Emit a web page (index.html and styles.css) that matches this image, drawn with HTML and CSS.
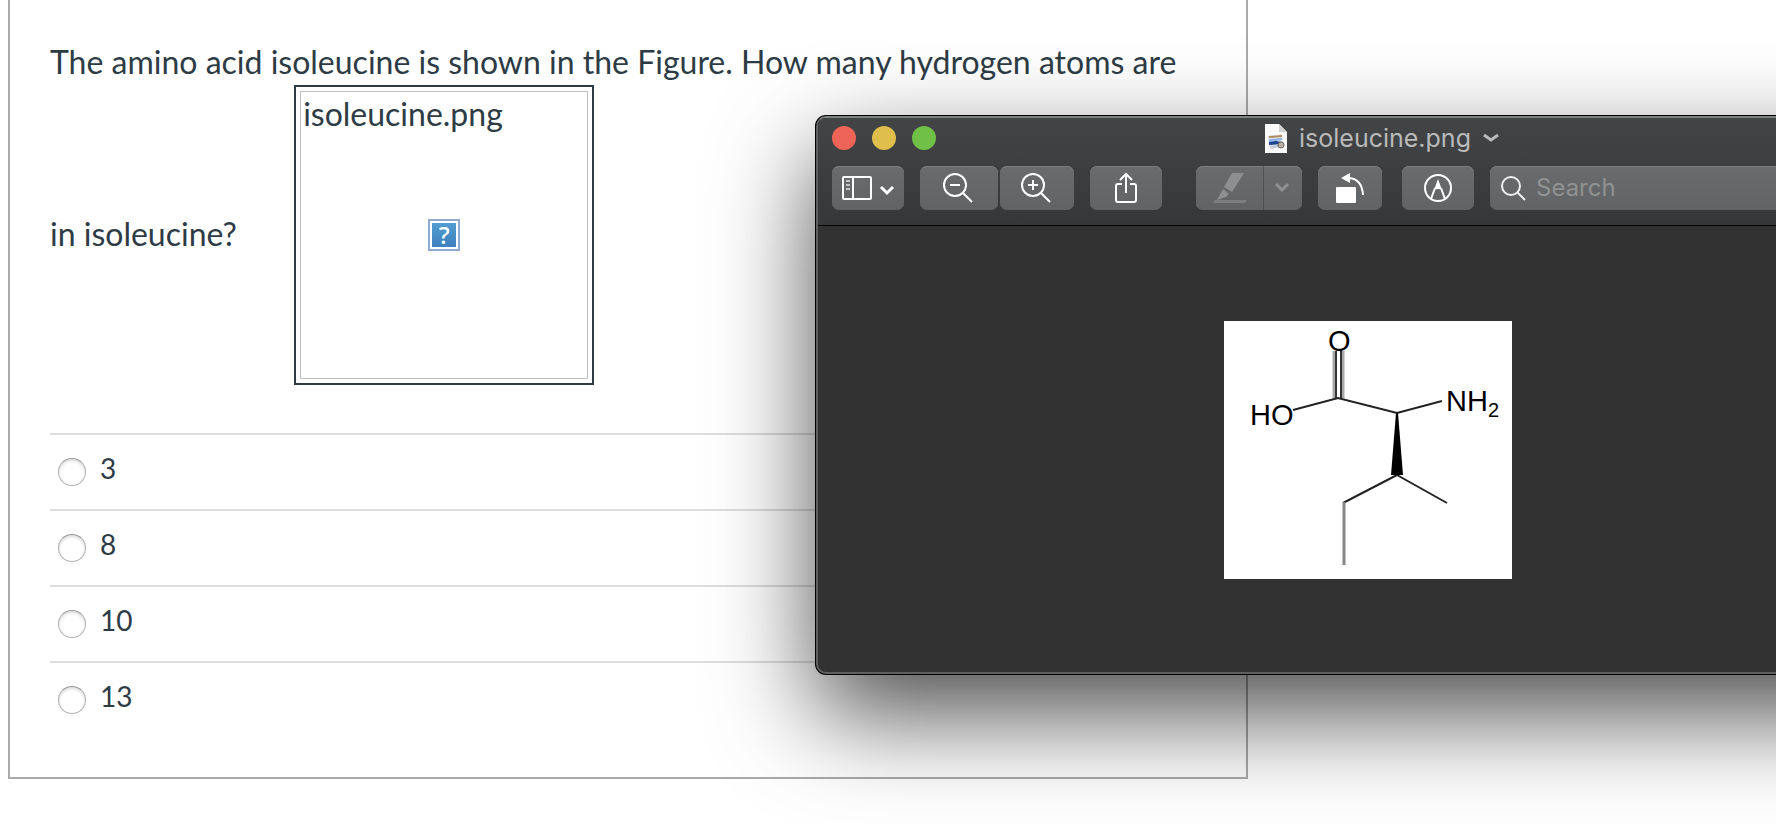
FILE: index.html
```html
<!DOCTYPE html>
<html lang="en">
<head>
<meta charset="utf-8">
<title>Quiz question</title>
<link rel="stylesheet" href="styles.css">
</head>
<body>
<div class="desktop">
<main class="question">
  <p class="question-text">
    The amino acid isoleucine is shown in the Figure. How many hydrogen atoms are<br>
    in isoleucine?
    <span class="missing">
      <span class="missing-frame">
        <span class="missing-alt">isoleucine.png</span>
        <span class="missing-icon">?</span>
      </span>
    </span>
  </p>
  <form class="answers">
    <label class="answer"><input type="radio" name="answer" value="3"><span>3</span></label>
    <label class="answer"><input type="radio" name="answer" value="8"><span>8</span></label>
    <label class="answer"><input type="radio" name="answer" value="10"><span>10</span></label>
    <label class="answer"><input type="radio" name="answer" value="13"><span>13</span></label>
  </form>
</main>

<section class="window" aria-label="isoleucine.png">
  <header class="chrome">
    <div class="titlebar">
      <div class="lights">
        <button class="light close" aria-label="Close"></button>
        <button class="light minimize" aria-label="Minimize"></button>
        <button class="light zoom" aria-label="Zoom"></button>
      </div>
      <div class="title">
        <svg width="22" height="29" viewBox="0 0 22 29">
          <path d="M0 0h14l8 8v21H0z" fill="#fafafa"/>
          <path d="M14 0v8h8z" fill="#d2d2d2"/>
          <path d="M3 12l14-2 1 10-14 3z" fill="#e4e6ea"/>
          <path d="M4 12l13-1v2L4 14z" fill="#b08d5c"/>
          <path d="M4 15l13-1v2l-6 1-7 1z" fill="#8fb4e6"/>
          <path d="M4 18l7-1 6 1v2l-13 1z" fill="#1d4596"/>
          <path d="M5 22l11-2v3l-10 2z" fill="#c3cbdc"/>
          <circle cx="16" cy="21" r="3" fill="#b9b3ab" stroke="#6d665f"/>
        </svg>
        <span>isoleucine.png</span>
        <svg class="title-arrow" width="16" height="10" viewBox="0 0 16 10">
          <path d="M1 2l7 5 7-5" fill="none" stroke="#b9baba" stroke-width="3"/>
        </svg>
      </div>
    </div>
    <div class="toolbar">
      <button class="tool w72" aria-label="Sidebar">
        <svg width="52" height="24" viewBox="0 0 52 24" fill="none" stroke="#fff" stroke-width="2">
          <rect x="1" y="1" width="28" height="22" rx="1"/>
          <path d="M11 1v22"/>
          <path d="M4 5h4M4 9h4M4 13h4" stroke="#c4c5c5"/>
          <path d="M39 11l6 6 6-6" stroke-width="3"/>
        </svg>
      </button>
      <div class="pair">
        <button class="tool w78" aria-label="Zoom out">
          <svg width="32" height="30" viewBox="0 0 32 30" fill="none" stroke="#fff" stroke-width="2">
            <circle cx="12" cy="12" r="11"/><path d="M7 12h10M20 20l9 9"/>
          </svg>
        </button>
        <button class="tool w74" aria-label="Zoom in">
          <svg width="32" height="30" viewBox="0 0 32 30" fill="none" stroke="#fff" stroke-width="2">
            <circle cx="12" cy="12" r="11"/><path d="M7 12h10M12 7v10M20 20l9 9"/>
          </svg>
        </button>
      </div>
      <button class="tool w72" aria-label="Share">
        <svg width="22" height="32" viewBox="0 0 22 32" fill="none" stroke="#fff" stroke-width="2">
          <path d="M7 12H3q-2 0-2 2v14q0 2 2 2h16q2 0 2-2V14q0-2-2-2h-4M11 21V2M5 8l6-6 6 6"/>
        </svg>
      </button>
      <div class="markup">
        <button class="tool w68" aria-label="Highlight" disabled>
          <svg width="36" height="32" viewBox="0 0 36 32" fill="#8e8f90">
            <path d="M20 1h12L20 20l-8-5z"/>
            <path d="M11 17l6 5-3 3-9 3z"/>
            <path d="M3 28h32l-2 3H1z" fill="#7d7e7f"/>
          </svg>
        </button>
        <button class="tool w38" aria-label="Highlight options" disabled>
          <svg width="18" height="12" viewBox="0 0 18 12" fill="none" stroke="#909192" stroke-width="3">
            <path d="M2 2l6 6 6-6"/>
          </svg>
        </button>
      </div>
      <button class="tool w64" aria-label="Rotate">
        <svg width="30" height="32" viewBox="0 0 30 32" fill="#fff">
          <rect x="1" y="15" width="20" height="16" rx="1"/>
          <path d="M6 6l9-5v10z"/>
          <path d="M14 6q13 1 14 17" fill="none" stroke="#fff" stroke-width="2"/>
        </svg>
      </button>
      <button class="tool w72" aria-label="Markup">
        <svg width="28" height="28" viewBox="0 0 28 28">
          <circle cx="14" cy="14" r="13" fill="none" stroke="#fff" stroke-width="2"/>
          <path d="M14 5l4 11q-4-2-8 0z" fill="#fff"/>
          <path d="M11 14L7 25M17 14l4 11" stroke="#fff" stroke-width="2"/>
        </svg>
      </button>
      <div class="search">
        <svg width="26" height="26" viewBox="0 0 26 26" fill="none" stroke="#f0f0f0" stroke-width="2">
          <circle cx="11" cy="11" r="9"/><path d="M17 17l8 8"/>
        </svg>
        <input type="text" placeholder="Search" aria-label="Search">
      </div>
    </div>
  </header>
  <div class="viewer">
    <svg class="picture" width="288" height="258" viewBox="0 0 288 258">
      <rect width="288" height="258" fill="#fff"/>
      <path d="M110 30v47M119 30v47" stroke="#a8a8a8" stroke-width="3"/>
      <path d="M112 30v47M117 30v47" stroke="#333" stroke-width="2"/>
      <path d="M69 89l45-12 59 15 45-12M173 154l-54 28M173 154l50 28" fill="none" stroke="#222" stroke-width="2"/>
      <path d="M120 181v63" stroke="#858585" stroke-width="3"/>
      <path d="M172 92h2l5 62h-12z"/>
      <g class="atoms">
        <text x="104" y="30">O</text>
        <text x="26" y="104">HO</text>
        <text x="222" y="90">NH<tspan class="sub" dy="6">2</tspan></text>
      </g>
    </svg>
  </div>
</section>
</div>
</body>
</html>
```

FILE: styles.css
```css
* { box-sizing: border-box; }

body {
  margin: 0;
  background: #fff;
  color: #2d3b45;
  font-family: Lato, sans-serif;
}
.desktop {
  position: relative;
  min-height: 100vh;
  overflow: hidden;
}

/* question card */
.question {
  margin: 0 528px 0 8px;
  padding: 40px 40px;
  border: 2px solid #aaa;
  border-top: 0;
}
.question-text {
  margin: 0;
  font-size: 32px;
  line-height: 44px;
}
.missing {
  display: inline-block;
  width: 300px;
  height: 300px;
  margin: 1px 0 6px 49px;
  padding: 4px;
  border: 2px solid #2d3b45;
  vertical-align: middle;
}
.missing-frame {
  display: grid;
  height: 100%;
  border: 1px solid #c0c0c0;
}
.missing-alt,
.missing-icon { grid-area: 1 / 1; }
.missing-alt { padding: 0 2px; }
.missing-icon {
  place-self: center;
  width: 32px;
  height: 32px;
  border: 2px solid #8fabd3;
  background: linear-gradient(#529fd3, #3c7ebb);
  box-shadow: inset 0 0 0 2px #fff;
  color: #fff;
  font: 600 24px/28px "Open Sans", sans-serif;
  text-align: center;
}

.answers { margin-top: 42px; }
.answer {
  display: flex;
  gap: 14px;
  height: 76px;
  padding: 17px 8px;
  border-top: 2px solid #ddd;
  font-size: 28px;
  line-height: 32px;
}
.answer input {
  appearance: none;
  width: 28px;
  height: 28px;
  margin: 6px 0 0;
  border: 1px solid #b0b0b0;
  border-top-color: #999;
  border-radius: 50%;
  background: #fff;
  box-shadow: inset 0 2px 3px #ddd;
}

/* preview window */
.window {
  position: absolute;
  top: 116px;
  left: 816px;
  right: -144px;
  border: 2px solid #5e5f5f;
  border-top-color: #808181;
  border-radius: 10px;
  background: #323232;
  box-shadow: 0 0 0 1px #000, 0 40px 100px rgba(0, 0, 0, .7);
  font-family: Inter, sans-serif;
  overflow: hidden;
}
.chrome {
  padding: 5px 14px 15px;
  border-bottom: 1px solid #000;
  background: linear-gradient(#434445, #363738);
}
.titlebar {
  display: grid;
  grid-template-columns: 1fr auto 1fr;
  align-items: center;
  height: 30px;
}
.lights {
  display: flex;
  gap: 16px;
}
.light {
  width: 24px;
  height: 24px;
  padding: 0;
  border: 0;
  border-radius: 50%;
}
.close { background: #ee6459; }
.minimize { background: #dfbe4b; }
.zoom { background: #70bf46; }
.title {
  display: flex;
  align-items: center;
  gap: 12px;
  color: #b9baba;
  font-size: 25px;
}
.title-arrow { margin-right: -28px; }

.toolbar {
  display: flex;
  gap: 16px;
  margin-top: 13px;
}
.tool {
  display: flex;
  flex: none;
  align-items: center;
  justify-content: center;
  height: 44px;
  padding: 0;
  border: 0;
  border-radius: 7px;
  background: linear-gradient(#6a6b6c, #626364);
  box-shadow: inset 0 1px #7e7f80;
}
.w38 { width: 38px; }
.w64 { width: 64px; }
.w68 { width: 67px; }
.w72 { width: 72px; }
.w74 { width: 74px; }
.w78 { width: 78px; }
.pair { display: flex; gap: 2px; }
.markup {
  display: flex;
  gap: 1px;
  margin: 0 0 0 18px;
  border-radius: 7px;
  background: #505152;
}
.markup .tool:first-child { border-radius: 7px 0 0 7px; }
.markup .tool:last-child { border-radius: 0 7px 7px 0; }
.toolbar > .w64 { margin-right: 4px; }
.search {
  display: flex;
  flex: 1;
  align-items: center;
  gap: 8px;
  padding: 0 10px;
  border-radius: 7px;
  background: linear-gradient(#6a6b6c, #626364);
  box-shadow: inset 0 1px #7e7f80;
}
.search input {
  flex: 1;
  min-width: 0;
  padding: 0 2px 2px;
  border: 0;
  outline: 0;
  background: none;
  color: #fff;
  font: 24px Inter, sans-serif;
}
.search input::placeholder { color: #919292; opacity: 1; }

.viewer {
  display: grid;
  place-items: center;
  padding: 95px 0 93px;
}
.picture { display: block; }
.atoms { font: 29px "Liberation Sans", sans-serif; }
.sub { font-size: 20px; }
```
